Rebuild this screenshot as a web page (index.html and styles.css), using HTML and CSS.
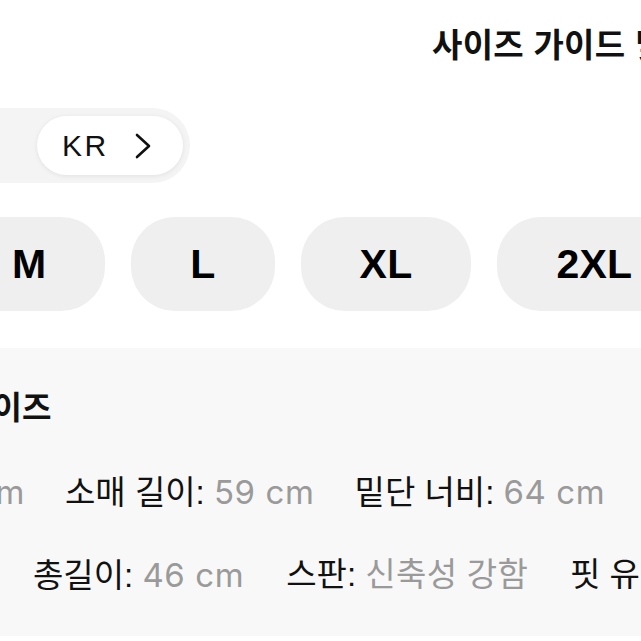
FILE: index.html
```html
<!DOCTYPE html>
<html lang="ko">
<head>
<meta charset="utf-8">
<title>사이즈 가이드</title>
<link rel="stylesheet" href="styles.css">
</head>
<body>
<div class="page">
  <header class="header">
    <h1 class="title">사이즈 가이드 및 핏 정보</h1>
  </header>

  <div class="segment">
    <button class="segment-pill">
      <span class="segment-label">KR</span>
      <svg class="chevron" width="18" height="28" viewBox="0 0 18 28" aria-hidden="true">
        <polyline points="3,3 15,14 3,25" fill="none" stroke="#111" stroke-width="2.6" stroke-linecap="round" stroke-linejoin="round"/>
      </svg>
    </button>
  </div>

  <div class="chips">
    <div class="chip">M</div>
    <div class="chip">L</div>
    <div class="chip">XL</div>
    <div class="chip">2XL</div>
  </div>

  <section class="panel">
    <h2 class="panel-title">사이즈</h2>
    <div class="spec-row">
      <div class="spec-clip"><span class="spec"><span class="label">어깨 너비:</span> <span class="value">52 cm</span></span></div>
      <span class="spec"><span class="label">소매 길이:</span> <span class="value">59 cm</span></span>
      <span class="spec"><span class="label">밑단 너비:</span> <span class="value">64 cm</span></span>
    </div>
    <div class="spec-row spec-row-2">
      <span class="spec"><span class="label">총길이:</span> <span class="value">46 cm</span></span>
      <span class="spec"><span class="label">스판:</span> <span class="value value-ko">신축성 강함</span></span>
      <span class="spec"><span class="label">핏 유형:</span> <span class="value value-ko">레귤러</span></span>
    </div>
  </section>
</div>
</body>
</html>
```

FILE: styles.css
```css
html, body {
  margin: 0;
  padding: 0;
  overflow: hidden;
  background: #ffffff;
}

.page {
  width: 641px;
  height: 641px;
  overflow: hidden;
  font-family: "Liberation Sans", "Noto Sans CJK KR", sans-serif;
  color: #111111;
}

.header {
  height: 108px;
  box-sizing: border-box;
  padding-top: 26px;
  padding-left: 432px;
}

.title {
  margin: 0;
  font-size: 33px;
  line-height: 40px;
  font-weight: 700;
  letter-spacing: 0.3px;
  white-space: nowrap;
  color: #111111;
}

.segment {
  width: 190px;
  height: 75px;
  box-sizing: border-box;
  padding: 8px 0 8px 37px;
  background: #f4f4f4;
  border-radius: 0 38px 38px 0;
  display: flex;
}

.segment-pill {
  width: 146px;
  height: 59px;
  box-sizing: border-box;
  border: none;
  border-radius: 30px;
  background: #ffffff;
  box-shadow: 0 1px 5px rgba(0, 0, 0, 0.08);
  display: flex;
  align-items: center;
  gap: 25px;
  padding: 0 0 0 25px;
  font-family: inherit;
  color: #111111;
}

.segment-label {
  font-size: 30px;
  line-height: 32px;
  font-weight: 400;
  letter-spacing: 2.5px;
}

.chevron {
  display: block;
}

.chips {
  margin-top: 34px;
  margin-left: -47px;
  display: flex;
  gap: 26px;
  white-space: nowrap;
}

.chip {
  flex: none;
  height: 94px;
  box-sizing: border-box;
  padding: 0 59px;
  border-radius: 44px;
  background: #efefef;
  display: flex;
  align-items: center;
  justify-content: center;
  font-size: 41px;
  font-weight: 700;
  letter-spacing: 0.2px;
  color: #000000;
}

.panel {
  margin-top: 37px;
  height: 288px;
  box-sizing: border-box;
  padding-top: 40px;
  background: #f8f8f8;
}

.panel-title {
  margin: 0 0 0 -37px;
  font-size: 32px;
  line-height: 40px;
  font-weight: 700;
  letter-spacing: 0;
  white-space: nowrap;
}

.spec-row {
  margin-top: 44px;
  display: flex;
  gap: 40px;
  white-space: nowrap;
  font-size: 33px;
  line-height: 40px;
}

.spec-row-2 {
  margin-top: 42px;
  padding-left: 33px;
  gap: 42px;
}

.spec-clip {
  flex: none;
  width: 25px;
  display: flex;
  justify-content: flex-end;
  overflow: hidden;
}

.spec {
  flex: none;
}

.label {
  color: #111111;
  letter-spacing: 0;
}

.value {
  color: #9a9a9a;
  font-family: Inter, "Liberation Sans", sans-serif;
  font-size: 33px;
  letter-spacing: 0.6px;
}

.value-ko {
  font-family: "Liberation Sans", "Noto Sans CJK KR", sans-serif;
  font-size: 33px;
  letter-spacing: 0.3px;
}
```
